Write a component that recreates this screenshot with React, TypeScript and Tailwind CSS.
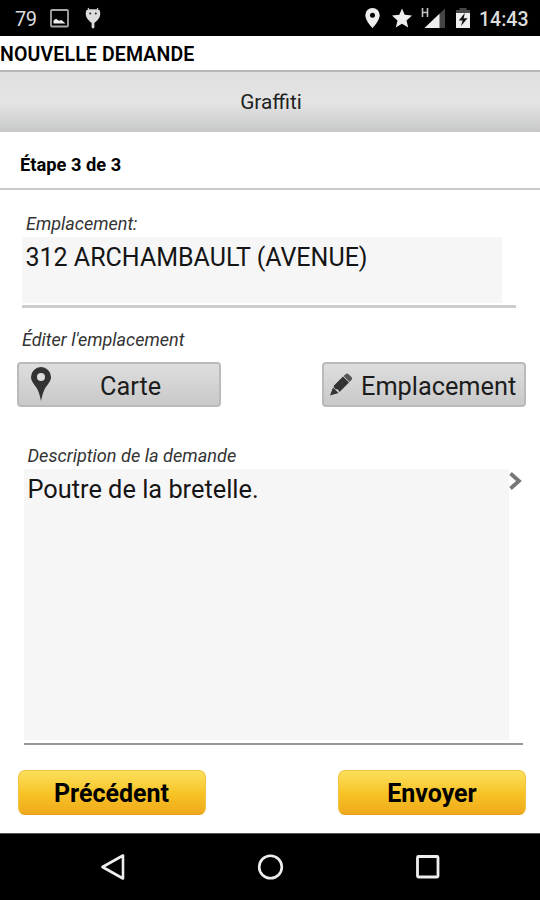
import type { ReactNode } from "react"

function StatusBar() {
  return (
    <header className="flex h-9 shrink-0 items-start bg-black pt-[7px] text-[#dcdcdc]">
      <span className="ml-[15px] w-[35px] text-[20px] leading-6 tracking-[-0.4px]">79</span>
      {/* Picture notification */}
      <svg className="mt-0.5 h-[19px] w-[19px]" viewBox="0 0 19 19">
        <rect x="1" y="1" width="17" height="16.5" rx="1" fill="none" stroke="#a8a8a8" strokeWidth="1.8" />
        <path d="M3.5 14.5v-3l2.5-1.700 3 2 2.500-.8 4 3.500z" fill="#eee" />
      </svg>
      {/* Debug droid */}
      <svg className="ml-4 h-[23px] w-4" viewBox="0 0 16 23" fill="currentColor">
        <path d="M3 1l1.800 3M13 1l-1.800 3" stroke="currentColor" strokeWidth="1.2" />
        <path d="M1.500 3C4 2 12 2 14.500 3c1.500 3 .8 7-1.500 9.500-1.500 2-3 3-3.600 3.200V20a1.400 1.400 0 0 1-2.800 0v-4.300C6 15.500 4.500 14.500 3 12.500.7 10 0 6 1.500 3z" />
        <circle cx="5.200" cy="6.500" r="1" fill="#222" />
        <circle cx="10.800" cy="6.500" r="1" fill="#222" />
      </svg>

      <div className="ml-auto flex items-start pr-[11px]">
        <svg className="mt-px h-5 w-[15px]" viewBox="0 0 15 20">
          <path d="M7.500 0A7.200 7.200 0 0 0 .3 7.200C.3 12.500 7.500 20 7.500 20s7.200-7.500 7.200-12.800A7.200 7.200 0 0 0 7.500 0z" fill="#eee" />
          <circle cx="7.500" cy="7.200" r="2.500" fill="#000" />
        </svg>
        <svg className="ml-3 mt-px h-5 w-5" viewBox="0 0 20 20" fill="#eee">
          <path d="M10 .5l2.700 6.300 7.300.7-5.500 4.900 1.700 7.100L10 15.700l-6.200 3.800 1.700-7.100L0 7.500l7.300-.7z" />
        </svg>
        {/* Signal strength with network type */}
        <svg className="ml-[9px] h-[22px] w-[25px]" viewBox="0 0 25 22">
          <path d="M1.500 1v9M6.500 1v9M1.500 5.500h5" fill="none" stroke="#c4c4c4" strokeWidth="1.600" />
          <path d="M24 1.500V21H3.500z" fill="#444" />
          <path d="M18.500 6.800V21H3.500z" fill="#eee" />
        </svg>
        <svg className="ml-[9px] h-[22px] w-4" viewBox="0 0 16 22">
          <path d="M1 6V3h3.500V1h7v2H15v3z" fill="#484848" />
          <path d="M1 6h14v15H1z" fill="#eee" />
          <path d="M9.800 6l-6 7.500h3.800L6 19l6.500-7.700H8.700z" fill="#111" />
        </svg>
        <span className="ml-2 w-[50px] whitespace-nowrap pt-px text-[19.500px] font-medium leading-6">14:43</span>
      </div>
    </header>
  )
}

function GreyButton({ icon, children }: { icon: ReactNode; children: ReactNode }) {
  return (
    <button className="flex h-[45px] w-[204px] items-center rounded-[4px] border-2 border-[#bbb] bg-linear-to-b from-[#dedede] to-[#c9c9c9] text-[25.300px] text-[#1c1c1c]">
      {icon}
      <span className="pt-1">{children}</span>
    </button>
  )
}

function YellowButton({ children }: { children: ReactNode }) {
  return (
    <button className="h-[45px] w-[188px] rounded-[7px] border border-[#f2c444] border-b-[#e4a01b] bg-linear-to-b from-[#fce05a] via-[#f7c526] to-[#efa91b] pt-0.5 text-[25px] font-bold text-black">
      {children}
    </button>
  )
}

function NavBar() {
  return (
    <nav className="flex h-[67px] shrink-0 items-center justify-between border-t border-[#555] bg-black pl-[99px] pr-[97px]">
      <svg className="h-[30px] w-[30px]" viewBox="0 0 30 30" fill="none" stroke="#eee" strokeWidth="2.600">
        <path d="M24 3.500v23L3.500 15z" strokeLinejoin="round" />
      </svg>
      <svg className="h-[30px] w-[30px]" viewBox="0 0 30 30" fill="none" stroke="#eee" strokeWidth="2.600">
        <circle cx="14.500" cy="15" r="11.300" />
      </svg>
      <svg className="h-[30px] w-[30px]" viewBox="0 0 30 30" fill="none" stroke="#eee" strokeWidth="2.800">
        <rect x="4.500" y="4.500" width="20.500" height="20.500" rx="1" />
      </svg>
    </nav>
  )
}

export default function App() {
  return (
    <div className="flex h-[900px] w-[540px] flex-col overflow-hidden bg-white font-['Roboto',sans-serif] text-black">
      <StatusBar />
      <h1 className="h-[34px] shrink-0 whitespace-nowrap pt-px text-[19.500px] font-semibold leading-9 tracking-[0.15px]">NOUVELLE DEMANDE</h1>
      <div className="flex h-[62px] shrink-0 items-center justify-center border-t-2 border-[#b5b7b7] bg-linear-to-b from-[#dfdfdf] via-[#e4e4e4] to-[#c7c8c9] pl-0.5 pt-0.5 text-[20.800px] text-[#222]">
        Graffiti
      </div>
      <div className="flex h-[58px] shrink-0 items-center border-b-2 border-[#cacaca] pl-5 pt-2.5 text-[18.300px] font-bold">
        Étape 3 de 3
      </div>

      <main className="flex flex-1 flex-col">
        <label className="mt-[22px] pl-[26px] text-[18px] italic leading-6 text-[#333]">Emplacement:</label>
        <div className="ml-[22px] mt-px h-[71px] w-[494px] border-b-[3px] border-[#cdcdcd]">
          <div className="h-[66px] w-[480px] whitespace-nowrap bg-[#f6f6f6] pl-[3.500px] pt-[5px] text-[25px] leading-8 text-[#151515]">
            312 ARCHAMBAULT (AVENUE)
          </div>
        </div>

        <p className="mt-5 pl-[22px] text-[18px] italic leading-6 text-[#333]">Éditer l'emplacement</p>
        <div className="mt-2.5 flex justify-between pl-[17px] pr-3.5">
          <GreyButton
            icon={
              <svg className="ml-[11px] mr-12 h-9 w-[22px]" viewBox="0 0 22 36">
                <path d="M11 0A10 10 0 0 0 1 10c0 5 4 7.500 6.500 12.500C9.500 26.500 10 30 11 34c1-4 1.500-7.500 3.500-11.500C17 17.500 21 15 21 10A10 10 0 0 0 11 0z" fill="#333" />
                <circle cx="11" cy="10" r="4" fill="#ddd" />
              </svg>
            }
          >
            Carte
          </GreyButton>
          <GreyButton
            icon={
              <svg className="ml-[5px] mr-2 h-6 w-6 shrink-0" viewBox="0 0 24 24">
                <path d="M1 22.500l3-8 5.500 5.500z" fill="#333" />
                <path d="M4.500 13L14 3.500l6 6L10.500 19 9 16.500l-3-.5z" fill="#333" />
                <path d="M14.600 3l2-1.800c1-1 2-1 3 0l2.800 2.800c1 1 1 2 0 3l-1.900 2z" fill="#555" />
              </svg>
            }
          >
            Emplacement
          </GreyButton>
        </div>

        <label className="mt-[37px] pl-[27.500px] text-[18.150px] italic leading-6 text-[#333]">Description de la demande</label>
        <div className="ml-6 mt-px flex h-[276px] w-[499px] items-start border-b-2 border-[#999]">
          <div className="h-[271px] w-[485px] bg-[#f6f6f6] pl-[3.500px] pt-1 text-[25.350px] leading-8 text-[#151515]">
            Poutre de la bretelle.
          </div>
          <svg className="mt-[3px] h-[18px] w-3.5" viewBox="0 0 14 18" fill="none" stroke="#777" strokeWidth="3.800">
            <path d="M1.500 1.500L10 9l-8.500 7.500" />
          </svg>
        </div>

        <div className="mt-[25px] flex justify-between pl-[17.500px] pr-3.5">
          <YellowButton>Précédent</YellowButton>
          <YellowButton>Envoyer</YellowButton>
        </div>
      </main>

      <NavBar />
    </div>
  )
}
